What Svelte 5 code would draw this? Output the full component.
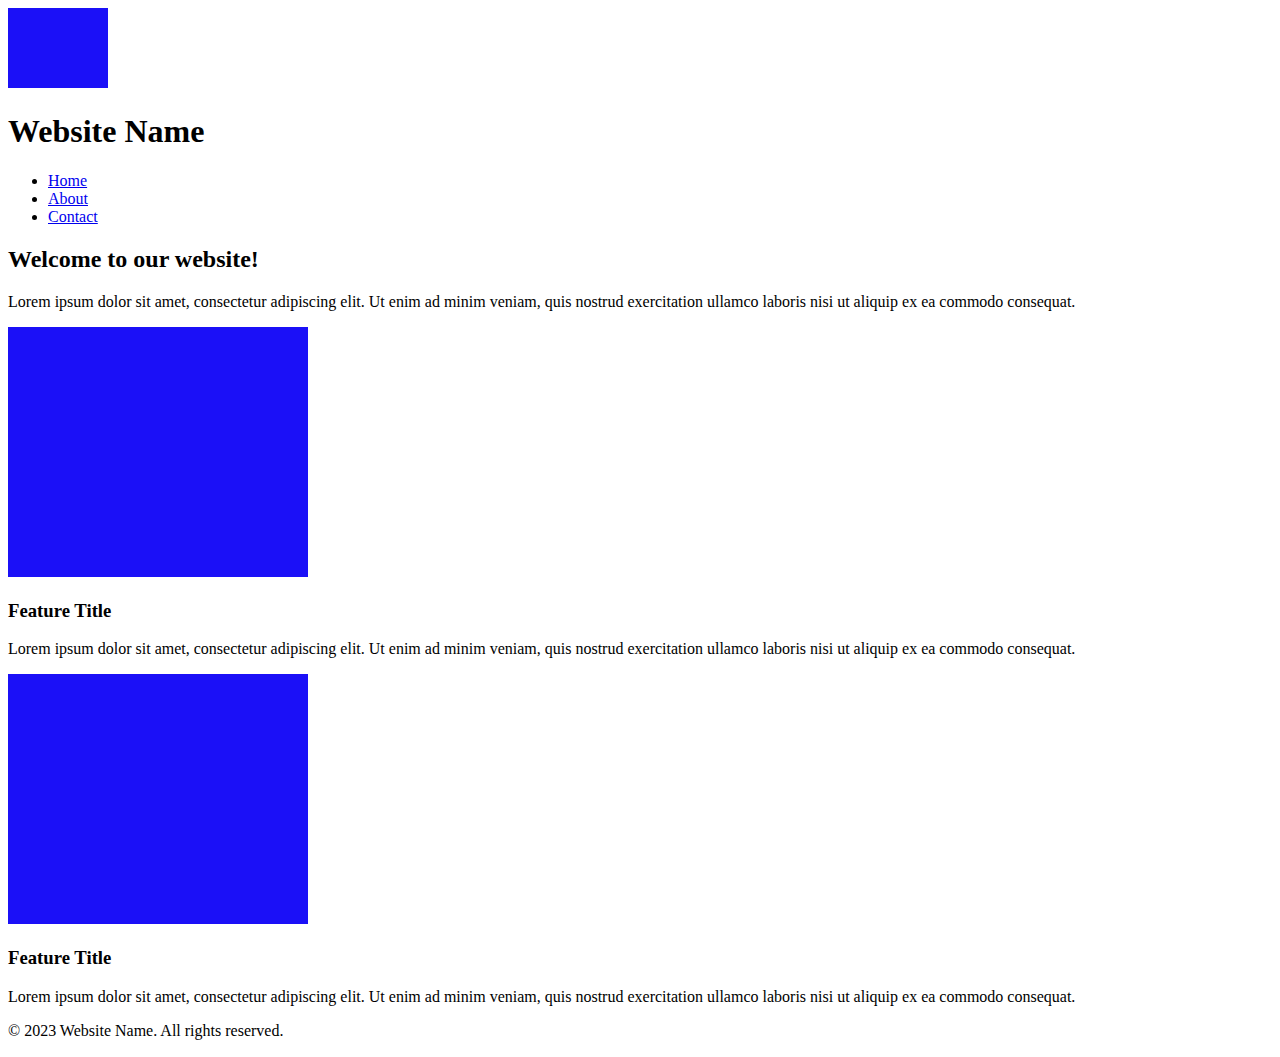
<script>
  const links = ['Home', 'About', 'Contact'];
  const features = [1, 2];
  const copy =
    'Lorem ipsum dolor sit amet, consectetur adipiscing elit. Ut enim ad minim veniam, quis nostrud exercitation ullamco laboris nisi ut aliquip ex ea commodo consequat.';
</script>

<div class="page">
  <header>
    <div class="logo"></div>
    <h1>Website Name</h1>
    <nav>
      <ul>
        {#each links as link}
          <li><a href="#{link.toLowerCase()}">{link}</a></li>
        {/each}
      </ul>
    </nav>
  </header>
  <main>
    <h2>Welcome to our website!</h2>
    <p>{copy}</p>
    {#each features as feature (feature)}
      <section>
        <div class="picture"></div>
        <h3>Feature Title</h3>
        <p>{copy}</p>
      </section>
    {/each}
  </main>
  <footer>
    <p>© 2023 Website Name. All rights reserved.</p>
  </footer>
</div>

<style>
  :global(body) {
    margin: 0;
    background: #ffffff;
  }

  .page {
    padding: 8px;
    color: #000000;
    font-family: 'Liberation Serif', 'Times New Roman', serif;
    font-size: 16px;
    line-height: 18px;
  }

  .logo,
  .picture {
    background: #1b10f7;
  }

  .logo {
    width: 100px;
    height: 80px;
  }

  .picture {
    width: 300px;
    height: 250px;
  }

  /* h1 and h3 keep the browser's own margins */
  h1 {
    padding-top: 4px;
    font-size: 32px;
    line-height: 37px;
  }

  h2 {
    margin: 20px 0;
    font-size: 24px;
    line-height: 27px;
  }

  h3 {
    padding-top: 4px;
    line-height: 22px;
  }

  p {
    margin: 16px 0;
  }

  ul {
    margin: 16px 0;
    padding-left: 40px;
    list-style: disc;
  }

  a {
    color: #0000ee;
    text-decoration: underline;
  }
</style>
